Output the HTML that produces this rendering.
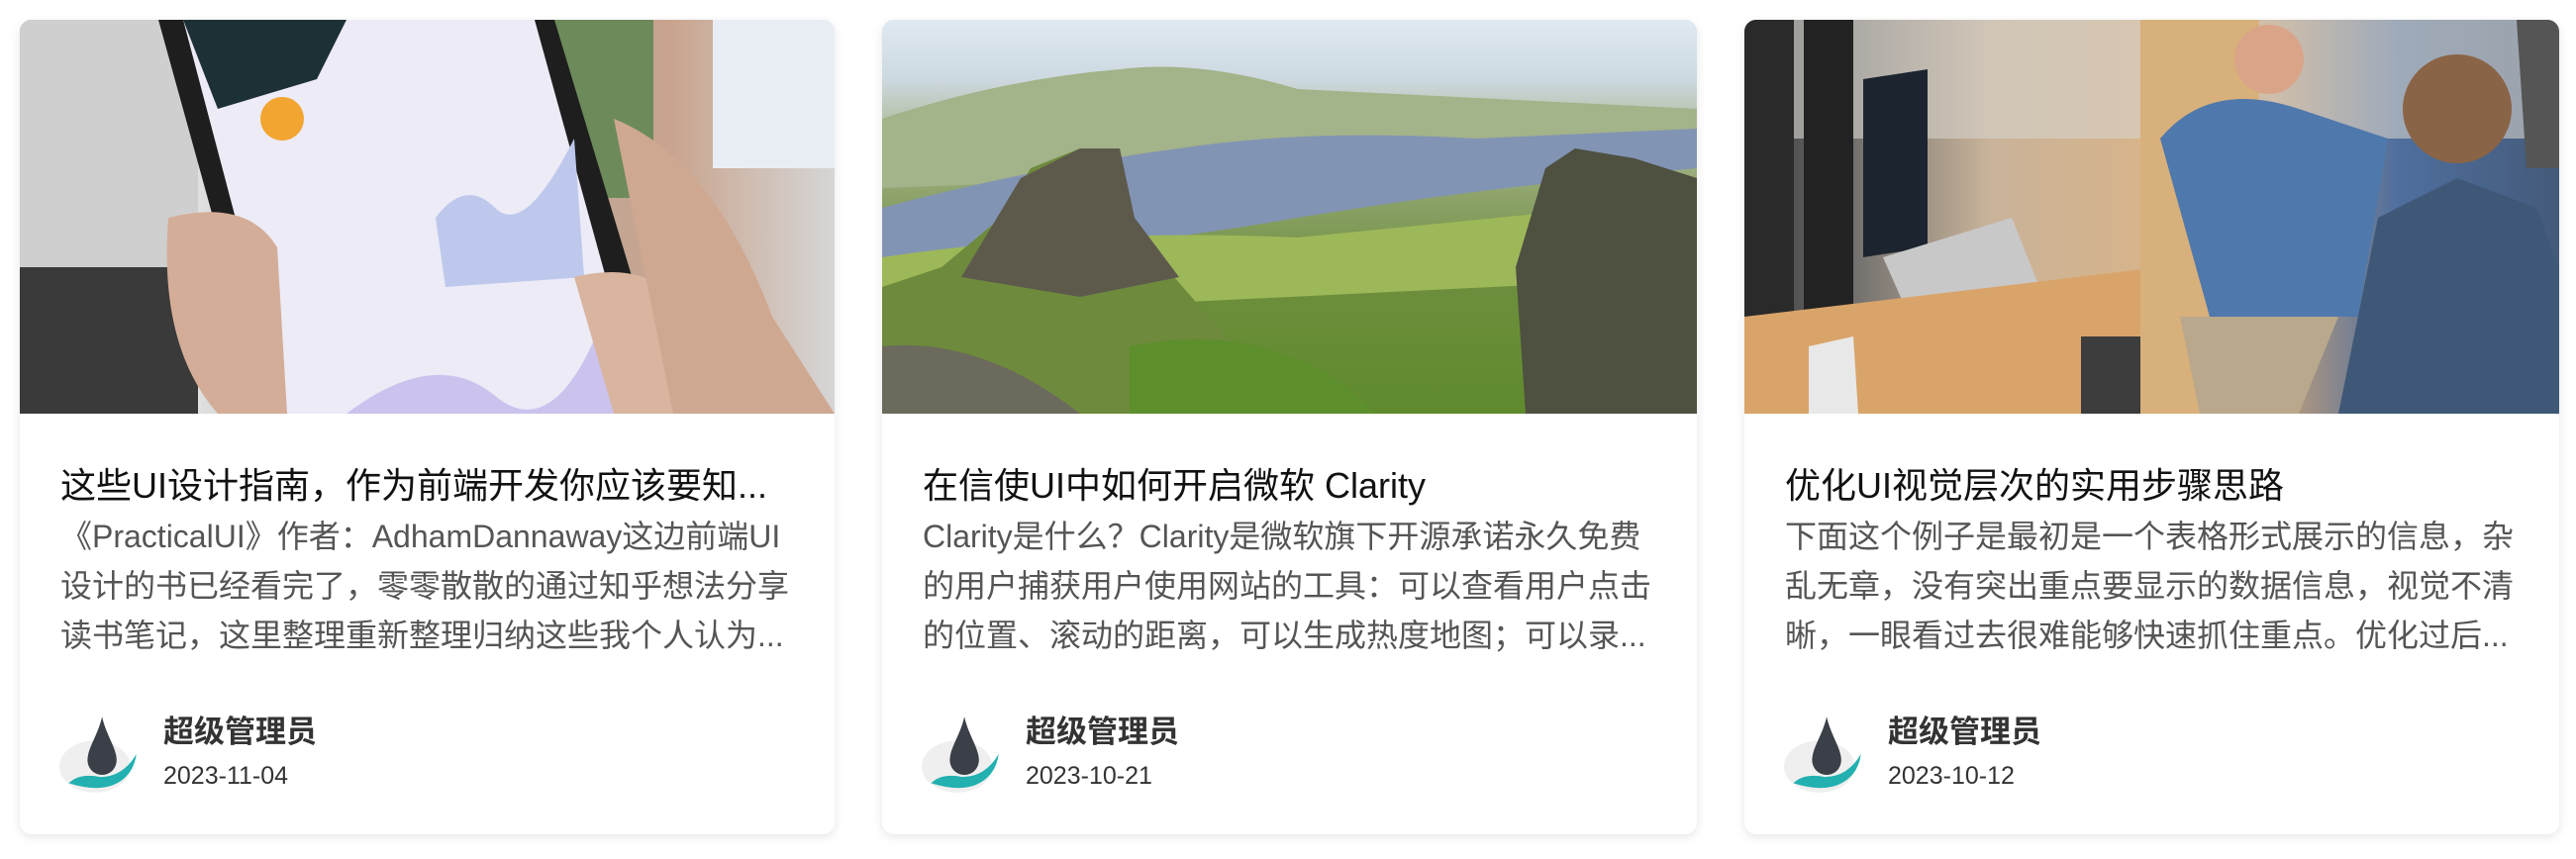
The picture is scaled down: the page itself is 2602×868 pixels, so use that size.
<!DOCTYPE html>
<html><head><meta charset="utf-8"><style>
*{margin:0;padding:0;box-sizing:border-box}
body{width:2602px;height:868px;background:#fff;font-family:"Liberation Sans","Noto Sans CJK SC",sans-serif;position:relative;overflow:hidden}
.card{position:absolute;top:20px;width:823px;height:823px;background:#fff;border-radius:12px;box-shadow:0 3px 10px rgba(0,0,0,0.10);overflow:hidden}
.img{position:absolute;left:0;top:0;width:823px;height:398px;overflow:hidden}
.t{position:absolute;left:41px;top:442px;font-size:36px;color:#111;white-space:nowrap;width:750px;overflow:hidden;text-overflow:ellipsis}
.d{position:absolute;left:41px;top:497px;width:760px;font-size:32px;line-height:50px;color:#555;white-space:nowrap}
.d div{height:50px}
.av{position:absolute;left:39px;top:700px;width:84px;height:84px}
.n{position:absolute;left:145px;top:694px;font-size:31px;font-weight:bold;color:#333}
.dt{position:absolute;left:145px;top:750px;font-size:25px;color:#333}
</style></head><body>

<div class="card" style="left:20px">
 <div class="img" style="background:linear-gradient(90deg,#8a8a8a 0%,#d8d8d8 10%,#e6e6e6 20%,#c9c9c9 30%,#b9a89c 62%,#c9a48e 80%,#d6d6d6 100%)">
  <svg width="823" height="398" viewBox="0 0 823 398">
   <rect x="0" y="0" width="180" height="398" fill="#cfcfcf"/>
   <rect x="0" y="250" width="180" height="148" fill="#3a3a3a"/>
   <rect x="540" y="0" width="100" height="180" fill="#6d8a5a"/>
   <rect x="700" y="0" width="123" height="150" fill="#e9eef4"/>
   <path d="M140 0 L540 0 L660 398 L250 398 Z" fill="#1e1e1e"/>
   <path d="M165 0 L520 0 L630 398 L270 398 Z" fill="#ecebf6"/>
   <path d="M165 0 L330 0 L300 60 L200 90 Z" fill="#1d3036"/>
   <circle cx="265" cy="100" r="22" fill="#f2a530"/>
   <path d="M420 200 Q450 160 480 190 T560 120 L570 260 L430 270 Z" fill="#bdc8ec"/>
   <path d="M330 398 Q420 330 480 380 T590 300 L620 398 Z" fill="#cbc2ee"/>
   <path d="M560 260 Q640 240 680 300 L740 398 L600 398 Z" fill="#d9b49e"/>
   <path d="M600 100 Q700 140 760 300 L823 398 L660 398 Z" fill="#cfa891"/>
   <path d="M150 200 Q230 180 260 230 L270 398 L200 398 Q140 330 150 200Z" fill="#d4ad98"/>
  </svg>
 </div>
 <div class="t">这些UI设计指南，作为前端开发你应该要知...</div>
 <div class="d"><div>《PracticalUI》作者：AdhamDannaway这边前端UI</div><div>设计的书已经看完了，零零散散的通过知乎想法分享</div><div>读书笔记，这里整理重新整理归纳这些我个人认为...</div></div>
 <svg class="av" viewBox="0 0 80 80"><ellipse cx="35" cy="52" rx="34" ry="25" fill="#efefef"/><path d="M42 4 C38 22 28 34 28 46 a14 14 0 0 0 28 0 C56 34 46 22 42 4Z" fill="#3b3f47"/><path d="M10 68 Q20 58 40 62 Q62 62 75 40 Q72 62 52 70 Q35 76 10 68Z" fill="#22b0b0"/></svg>
 <div class="n">超级管理员</div><div class="dt">2023-11-04</div>
</div>

<div class="card" style="left:891px">
 <div class="img" style="background:linear-gradient(180deg,#dfe9f2 0%,#cdd9e0 15%,#a9b892 30%,#8da36a 45%,#6e8f3e 65%,#5f8a2c 100%)">
  <svg width="823" height="398" viewBox="0 0 823 398">
   <path d="M0 100 Q120 60 240 50 Q320 40 420 70 L823 90 L823 140 L0 170 Z" fill="#a3b38a"/>
   <path d="M0 190 Q150 150 300 130 Q430 110 600 120 L823 110 L823 150 Q600 170 420 200 Q250 230 0 250 Z" fill="#8294b4"/>
   <path d="M0 240 Q200 210 420 220 L823 180 L823 260 L0 300Z" fill="#9db858"/>
   <path d="M0 270 L60 250 L120 200 L150 150 L200 130 L240 160 L260 220 L330 300 L420 398 L0 398Z" fill="#6e8a3c"/>
   <path d="M80 260 L140 160 L200 130 L240 130 L255 200 L300 260 L200 280Z" fill="#5d5a4c"/>
   <path d="M650 398 L640 250 L670 150 L700 130 L760 140 L823 160 L823 398Z" fill="#4e5040"/>
   <path d="M0 330 Q100 320 200 398 L0 398Z" fill="#6b6a5c"/>
   <path d="M250 330 Q400 300 500 398 L250 398Z" fill="#5d8f2c"/>
  </svg>
 </div>
 <div class="t">在信使UI中如何开启微软 Clarity</div>
 <div class="d"><div>Clarity是什么？Clarity是微软旗下开源承诺永久免费</div><div>的用户捕获用户使用网站的工具：可以查看用户点击</div><div>的位置、滚动的距离，可以生成热度地图；可以录...</div></div>
 <svg class="av" viewBox="0 0 80 80"><ellipse cx="35" cy="52" rx="34" ry="25" fill="#efefef"/><path d="M42 4 C38 22 28 34 28 46 a14 14 0 0 0 28 0 C56 34 46 22 42 4Z" fill="#3b3f47"/><path d="M10 68 Q20 58 40 62 Q62 62 75 40 Q72 62 52 70 Q35 76 10 68Z" fill="#22b0b0"/></svg>
 <div class="n">超级管理员</div><div class="dt">2023-10-21</div>
</div>

<div class="card" style="left:1762px">
 <div class="img" style="background:linear-gradient(90deg,#3a3a3a 0%,#6a6a6a 12%,#c9b39a 30%,#d8b48a 50%,#c3a07a 65%,#4f6f9e 80%,#445a7a 100%)">
  <svg width="823" height="398" viewBox="0 0 823 398">
   <rect x="0" y="0" width="823" height="120" fill="#d6d2cc" opacity="0.6"/>
   <path d="M0 0 L50 0 L50 398 L0 398Z" fill="#2a2a2a"/>
   <path d="M60 0 L110 0 L110 320 L60 340Z" fill="#222"/>
   <path d="M120 60 L185 50 L185 230 L120 240Z" fill="#1c2430"/>
   <path d="M140 240 L270 200 L310 300 L180 330Z" fill="#c8c8c8"/>
   <path d="M0 300 L420 250 L420 398 L0 398Z" fill="#d9a46a"/>
   <path d="M340 320 L420 320 L430 398 L340 398Z" fill="#3c3c3c"/>
   <path d="M65 330 L110 320 L115 398 L65 398Z" fill="#e8e8e8"/>
   <path d="M400 0 L520 0 L520 398 L400 398Z" fill="#d8b07c"/>
   <path d="M420 120 Q470 60 560 90 L650 120 L620 300 L470 300 Z" fill="#4f78ac"/>
   <path d="M440 300 L600 300 L560 398 L460 398Z" fill="#b9a88c"/>
   <circle cx="530" cy="40" r="35" fill="#d9a488"/>
   <path d="M600 398 L640 200 L720 160 L800 190 L823 250 L823 398Z" fill="#3f5878"/>
   <circle cx="720" cy="90" r="55" fill="#8a6446"/>
   <path d="M780 0 L823 0 L823 150 L790 150Z" fill="#555"/>
  </svg>
 </div>
 <div class="t">优化UI视觉层次的实用步骤思路</div>
 <div class="d"><div>下面这个例子是最初是一个表格形式展示的信息，杂</div><div>乱无章，没有突出重点要显示的数据信息，视觉不清</div><div>晰，一眼看过去很难能够快速抓住重点。优化过后...</div></div>
 <svg class="av" viewBox="0 0 80 80"><ellipse cx="35" cy="52" rx="34" ry="25" fill="#efefef"/><path d="M42 4 C38 22 28 34 28 46 a14 14 0 0 0 28 0 C56 34 46 22 42 4Z" fill="#3b3f47"/><path d="M10 68 Q20 58 40 62 Q62 62 75 40 Q72 62 52 70 Q35 76 10 68Z" fill="#22b0b0"/></svg>
 <div class="n">超级管理员</div><div class="dt">2023-10-12</div>
</div>
</body></html>
